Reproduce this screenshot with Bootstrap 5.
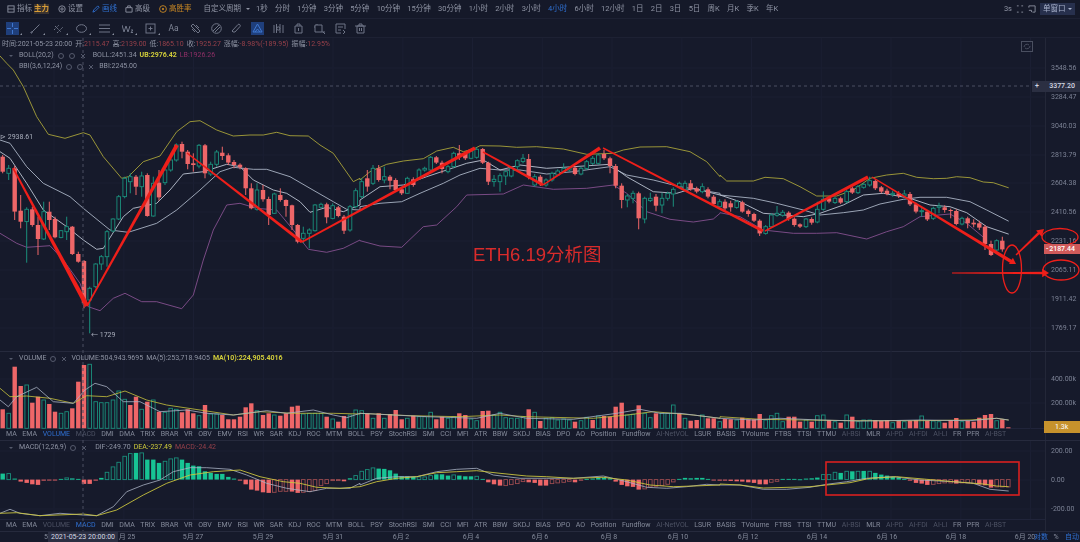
<!DOCTYPE html>
<html lang="zh">
<head>
<meta charset="utf-8">
<title>ETH 4小时 K线</title>
<link href="https://cdn.jsdelivr.net/npm/bootstrap@5.3.0/dist/css/bootstrap.min.css" rel="stylesheet">
<style>
html,body{background:#161a2b;height:542px;overflow:hidden}
body{font-family:Roboto,"Noto Sans CJK SC",sans-serif;font-size:7px;line-height:1;color:#8f94a4;position:relative;width:1080px}
svg{display:block}
.bar-top,.bar-draw,.stack{filter:blur(.35px)}
.ico{width:8px;height:8px;fill:none;stroke:currentColor;stroke-width:1;flex:none}
.bar-top{height:19px;padding-left:7px;font-size:7.5px;border-bottom:1px solid #1d2133;background:#151929}
.bar-top .tb-i{gap:2px}
.tb-badge{background:#3a3330;color:#d89c36;font-weight:700;padding:1.5px 0;width:15px;text-align:center}
.tb-blue{color:#2f6fd0}
.tb-gold{color:#c98824}
.tb-periods{gap:7.25px;margin-left:6px}
.tb-right{margin-left:auto;gap:4px;padding-right:5px}
.tb-btn{background:#27304d;color:#a9b2cc;padding:2px 3px;width:35px;height:12px;white-space:nowrap}
.caret-s{display:inline-block;border:2px solid transparent;border-top:2.5px solid currentColor;border-bottom:0;margin-left:2px;vertical-align:middle}
.bar-draw{height:19px;padding-left:1px;border-bottom:1px solid #1d2133;background:#151929;color:#6f7587}
.tool{width:23px;height:19px;position:relative}
.tool-n{width:20.7px}
.tool .ico{width:11px;height:11px}
.tool-on .ico{background:#1f3f7c;color:#3f78d0;outline:1px solid #1f3f7c}
.tool i{position:absolute;right:2px;bottom:3px;border-left:2px solid transparent;border-bottom:2px solid #8a90a0;width:0;height:0}
.stack{position:relative;height:504px}
.pane-main{height:314px;border-bottom:1px solid #262a3d}
.pane-vol{height:89px;border-bottom:1px solid #262a3d}
.pane-macd{height:90.5px;border-bottom:1px solid #262a3d}
.plot{position:relative;flex:1 1 auto;min-height:0}
.plot-svg{position:absolute;left:0;top:0}
.left-col{width:1045px}
.axis-col{width:35px;position:relative;border-left:1px solid #232738}
.axis-col span{position:absolute;left:5px;color:#7c8295;transform:translateY(-50%);white-space:nowrap}
.tab-row{height:12px;border-top:1px solid #20243a;padding-left:6px;gap:5.6px;white-space:nowrap;color:#848a9a;flex:none}
.tab-dim{color:#4d5264}
.tab-on{color:#2f6fd0}
.legend{position:absolute;left:2px;top:1px;z-index:2;white-space:nowrap}
.legend-row{display:flex;align-items:center;gap:3px;height:11px}
.legend-in{padding-left:5px}
.legend .ico{width:6px;height:6px;color:#555a6c;margin:0 1px}
.v-red{color:#96404a}
.v-yel{color:#cfcb3a;font-weight:700}
.v-pur{color:#8e2f66}
.date-row{height:10.5px;position:relative}
.date-row span{position:absolute;top:2px;transform:translateX(-50%);color:#848a9a;white-space:nowrap}
.date-row .dt-tip{background:#2b2f42;color:#d5d8e2;top:0;height:10.5px;padding:2px 3px;z-index:2}
.date-row .dt-blue{color:#2f6fd0;transform:none}
.mark-layer{position:absolute;left:0;top:0;z-index:3;pointer-events:none}
.ana-text{position:absolute;left:473px;top:205px;font-size:18.5px;line-height:24px;color:#d92b2b;z-index:3;white-space:nowrap;font-family:"Liberation Sans","Noto Sans CJK SC",sans-serif}
.px-tag{position:absolute;z-index:4;left:1044px;width:36px;height:10px;line-height:10px;padding-left:2px;padding-right:5px;color:#fff;font-weight:500;white-space:nowrap}
.tag-cross{left:1032px;width:48px;background:#2b2f42;color:#d5d8e2;padding-left:3px;height:11px;line-height:11px;top:43px}
.tag-now{background:#cf5a5a;top:206px}
.tag-vol{background:#c6922c;top:383px;height:12px;line-height:12px;font-weight:400;padding-left:11px}
.price-note{position:absolute;color:#a9aebc;z-index:2;white-space:nowrap}
.fs-ico{position:absolute;left:1021px;top:3px;color:#4a4f60;width:12px;height:11px;z-index:2}
.gap-l1{margin-left:1px}
.gap-l4{margin-left:4px}
</style>
</head>
<body>
<div class="bar-top d-flex align-items-center">
  <div class="tb-i d-flex align-items-center"><svg class="ico" viewBox="0 0 9 9"><rect x="1" y="1" width="7" height="7"/><path d="M1 4.5h7"/></svg><span>指标</span><span class="tb-badge">主力</span></div>
  <div class="tb-i d-flex align-items-center" style="margin-left:9px"><svg class="ico" viewBox="0 0 9 9"><circle cx="4.5" cy="4.5" r="3.6"/><circle cx="4.5" cy="4.5" r="1.3"/></svg><span>设置</span></div>
  <div class="tb-i d-flex align-items-center tb-blue" style="margin-left:9px"><svg class="ico" viewBox="0 0 9 9"><path d="M1 8l1-2.5L6.5 1 8 2.5 3.5 7z"/></svg><span>画线</span></div>
  <div class="tb-i d-flex align-items-center" style="margin-left:8px"><svg class="ico" viewBox="0 0 9 9"><path d="M1 3h7v5H1zM3 3V1h3v2"/></svg><span>高级</span></div>
  <div class="tb-i d-flex align-items-center tb-gold" style="margin-left:9px"><svg class="ico" viewBox="0 0 9 9"><circle cx="4.5" cy="4.5" r="3.8"/><circle cx="4.5" cy="4.5" r=".8" fill="currentColor"/></svg><span>高胜率</span></div>
  <div style="margin-left:12px">自定义周期<span class="caret-s" style="margin-left:5px"></span></div>
  <div class="tb-periods d-flex align-items-center">
    <span>1秒</span><span>分时</span><span>1分钟</span><span>3分钟</span><span>5分钟</span><span>10分钟</span><span>15分钟</span><span>30分钟</span><span>1小时</span><span>2小时</span><span>3小时</span><span class="tb-blue">4小时</span><span>6小时</span><span>12小时</span><span>1日</span><span>2日</span><span>3日</span><span>5日</span><span>周K</span><span>月K</span><span>季K</span><span>年K</span>
  </div>
  <div class="tb-right d-flex align-items-center">
    <span>3s</span>
    <svg class="ico" viewBox="0 0 9 9"><path d="M1 1h2M6 1h2M1 8h2M6 8h2M1 3v0M8 3v0"/></svg>
    <svg class="ico" viewBox="0 0 9 9"><path d="M1 1h7v7H5M1 1v2"/><path d="M1 6h3v2"/></svg>
    <span class="tb-btn d-inline-flex align-items-center">单窗口<span class="caret-s"></span></span>
  </div>
</div>
<div class="bar-draw d-flex align-items-center">
  <div class="tool tool-on d-flex align-items-center justify-content-center"><svg class="ico" viewBox="0 0 11 11"><path d="M5.500 0v4M5.500 7v4M0 5.500h4M7 5.500h4"/></svg><i></i></div>
  <div class="tool d-flex align-items-center justify-content-center"><svg class="ico" viewBox="0 0 11 11"><path d="M1.500 9.500l8-8"/><circle cx="1.500" cy="9.500" r=".7"/></svg><i></i></div>
  <div class="tool d-flex align-items-center justify-content-center"><svg class="ico" viewBox="0 0 11 11"><path d="M1 7l5-5M4 10l6-6M2 3l6 6" stroke-dasharray="2 1"/></svg><i></i></div>
  <div class="tool d-flex align-items-center justify-content-center"><svg class="ico" viewBox="0 0 11 11"><ellipse cx="5.500" cy="5.500" rx="5" ry="3.800"/></svg><i></i></div>
  <div class="tool d-flex align-items-center justify-content-center"><svg class="ico" viewBox="0 0 11 11"><path d="M0 2h11M0 5.500h11M0 9h11"/></svg><i></i></div>
  <div class="tool d-flex align-items-center justify-content-center"><svg class="ico" viewBox="0 0 11 11"><path d="M0 2l2 7 2-6 2 6 2-6"/><path d="M9 7h2l-2 2.500h2"/></svg><i></i></div>
  <div class="tool d-flex align-items-center justify-content-center"><svg class="ico" viewBox="0 0 11 11"><rect x="1" y="1" width="9" height="9"/><path d="M3.500 5.500h4M5.500 3.500v4"/></svg><i></i></div>
  <div class="tool d-flex align-items-center justify-content-center"><span style="font-size:8.5px;color:#7f8595">Aa</span></div>
  <div class="tool tool-n d-flex align-items-center justify-content-center"><svg class="ico" viewBox="0 0 11 11"><path d="M3 1l7 7-2 2-7-7zM2 6l3 3M6 2l3 3"/></svg></div>
  <div class="tool tool-n d-flex align-items-center justify-content-center"><svg class="ico" viewBox="0 0 11 11"><circle cx="5.500" cy="5.500" r="4.800"/><path d="M2 8l6-6M4 9l5-5"/></svg></div>
  <div class="tool tool-n d-flex align-items-center justify-content-center"><svg class="ico" viewBox="0 0 11 11"><path d="M2 9l-1-1 6-6.500c1-1 3 .5 2 2L4 9z"/></svg></div>
  <div class="tool tool-n tool-on d-flex align-items-center justify-content-center"><svg class="ico" viewBox="0 0 11 11"><path d="M5.500 1L1 9h9zM3 9l2.500-3L8 9"/></svg></div>
  <div class="tool tool-n d-flex align-items-center justify-content-center"><svg class="ico" viewBox="0 0 11 11"><path d="M1 2v8M3.500 1v9M7 1v9M10 2v8"/><circle cx="5.300" cy="5.500" r="1.600"/></svg></div>
  <div class="tool tool-n d-flex align-items-center justify-content-center"><svg class="ico" viewBox="0 0 11 11"><path d="M2 3h7v7H2zM4 3V1h3v2M5.500 5v3"/></svg></div>
  <div class="tool tool-n d-flex align-items-center justify-content-center"><svg class="ico" viewBox="0 0 11 11"><path d="M1 2h7v7H1zM3 2v-1M1 4H0M9 9l2 2M8 9h3"/></svg></div>
  <div class="tool tool-n d-flex align-items-center justify-content-center"><svg class="ico" viewBox="0 0 11 11"><path d="M1 1h9v5M1 1v9h5M3 4h5M3 7l3 0M8 7l2 2-2 2"/></svg></div>
  <div class="tool tool-n d-flex align-items-center justify-content-center"><svg class="ico" viewBox="0 0 11 11"><path d="M2 3h7v7H2zM0 3h11M4 3V1h3v2M4.500 5v3M6.500 5v3"/></svg></div>
</div>

<div class="stack">
  <div class="pane-main d-flex">
    <div class="left-col plot" id="plotMain">
      <svg class="fs-ico" viewBox="0 0 12 11"><rect x=".5" y=".5" width="11" height="10" fill="none" stroke="currentColor"/><path d="M3 6a3 3 0 0 1 5-2M9 5a3 3 0 0 1-5 2" fill="none" stroke="currentColor"/></svg>
      <div class="legend">
        <div class="legend-row"><span>时间:2021-05-23 20:00</span><span>开:<b class="v-red fw-normal">2115.47</b></span><span>高:<b class="v-red fw-normal">2139.00</b></span><span>低:<b class="v-red fw-normal">1865.10</b></span><span>收:<b class="v-red fw-normal">1925.27</b></span><span>涨幅:<b class="v-red fw-normal">-8.98%(-189.95)</b></span><span>振幅:<b class="v-red fw-normal">12.95%</b></span></div>
        <div class="legend-row legend-in"><span class="caret-s" style="margin-right:3px;color:#555a6c"></span><span>BOLL(20,2)</span><svg class="ico" viewBox="0 0 6 6"><circle cx="3" cy="3" r="2.500"/></svg><svg class="ico" viewBox="0 0 6 6"><circle cx="3" cy="3" r="2.500"/></svg><svg class="ico" viewBox="0 0 6 6"><path d="M1 1l4 4M5 1L1 5"/></svg><span style="margin-left:3px">BOLL:2451.34</span><span class="v-yel">UB:2976.42</span><span class="v-pur">LB:1926.26</span></div>
        <div class="legend-row legend-in"><span style="width:9px"></span><span>BBI(3,6,12,24)</span><svg class="ico" viewBox="0 0 6 6"><circle cx="3" cy="3" r="2.500"/></svg><svg class="ico" viewBox="0 0 6 6"><circle cx="3" cy="3" r="2.500"/></svg><svg class="ico" viewBox="0 0 6 6"><path d="M1 1l4 4M5 1L1 5"/></svg><span class="gap-l1">BBI:2245.00</span></div>
      </div>
      <span class="price-note" style="left:0;top:96px">⊳ 2938.61</span>
      <span class="price-note" style="left:91px;top:294px">← 1729</span>
    </div>
    <div class="axis-col" id="axisMain"></div>
  </div>
  <div class="pane-vol d-flex">
    <div class="left-col d-flex flex-column">
      <div class="plot" id="plotVol">
        <div class="legend"><div class="legend-row legend-in"><span class="caret-s" style="margin-right:3px;color:#555a6c"></span><span>VOLUME</span><svg class="ico" viewBox="0 0 6 6"><circle cx="3" cy="3" r="2.500"/></svg><svg class="ico" viewBox="0 0 6 6"><path d="M1 1l4 4M5 1L1 5"/></svg><span>VOLUME:504,943.9695</span><span>MA(5):253,718.9405</span><span class="v-yel">MA(10):224,905.4016</span></div></div>
      </div>
      <div class="tab-row d-flex align-items-center" id="tabs1"></div>
    </div>
    <div class="axis-col" id="axisVol"></div>
  </div>
  <div class="pane-macd d-flex">
    <div class="left-col d-flex flex-column">
      <div class="plot" id="plotMacd">
        <div class="legend"><div class="legend-row legend-in"><span class="caret-s" style="margin-right:3px;color:#555a6c"></span><span>MACD(12,26,9)</span><svg class="ico" viewBox="0 0 6 6"><circle cx="3" cy="3" r="2.500"/></svg><svg class="ico" viewBox="0 0 6 6"><path d="M1 1l4 4M5 1L1 5"/></svg><span class="gap-l4">DIF:-249.70</span><span class="v-yel fw-normal">DEA:-237.49</span><span class="v-red">MACD:-24.42</span></div></div>
      </div>
      <div class="tab-row d-flex align-items-center" id="tabs2"></div>
    </div>
    <div class="axis-col" id="axisMacd"></div>
  </div>
  <div class="date-row" id="dates"></div>
  <svg class="mark-layer" id="marks" width="1080" height="504" viewBox="0 38 1080 504"></svg>
  <div class="ana-text">ETH6.19分析图</div>
  <div class="px-tag tag-cross d-flex justify-content-between"><span>+</span><span>3377.20</span></div>
  <div class="px-tag tag-now d-flex justify-content-between"><span>-</span><span>2187.44</span></div>
  <div class="px-tag tag-vol">1.3k</div>
</div>

<script src="https://cdn.jsdelivr.net/npm/bootstrap@5.3.0/dist/js/bootstrap.bundle.min.js"></script>
<script>
// Candle data read off the chart: x, bodyTop, bodyBottom, colour, [wickTop, wickBottom]. Units are 1/3 px in three sections.
const seg=[
[0,"8,260,305,r,255,310;26,295,310,g,285,330;44,295,425,r,288,450;62,422,455,r,375,475;80,418,455,g,412,578;97,418,465,r,410,470;114,465,507,r,440,555;131,425,507,g,395,510;148,425,450,r,395,480;165,447,502,r,440,505;183,482,502,g,480,505;200,470,485,g,440,510;217,470,552,r,468,555;235,552,575,r,545,578;252,573,700,r,570,715;269,655,690,g,650,790;287,582,650,g,580,655;304,560,582,g,555,600;321,485,560,g,480,590;339,447,483,g,445,487;356,380,447,g,375,450;374,325,380,g,320,385;391,320,335,g,310,370;408,320,350,r,315,375;425,318,350,g,305,380;442,315,438,r,310,440;460,340,438,g,320,440;477,338,382,r,300,392;495,300,338,g,290,345;512,270,300,g,255,305;529,225,270,g,220,275;546,222,245,r,215,265;563,245,282,r,240,298;580,280,285,r,250,305;597,226,288,g,222,295;615,226,310,r,222,325;632,283,312,g,275,318;650,246,283,g,240,290;667,248,258,r,230,270;685,256,278,r,250,285;702,276,285,r,270,295;720,284,292,r,280,298;737,295,355,r,292,375;754,355,415,r,340,418;771,360,418,g,340,422;789,360,388,r,345,395;806,387,435,r,380,465;823,372,430,g,368,432;841,375,390,r,355,395;858,390,408,r,388,440;876,406,465,r,404,480;893,465,515,r,462,520;910,490,505,g,470,520;928,480,490,g,475,535;945,405,482,g,402,485;963,403,412,g,398,415;980,403,442,r,398,460;998,407,445,g,400,448;1015,412,438,r,408,442;1032,440,482,r,435,492;1050,410,480,g,405,485;1067,362,410,g,355,415"],
[360,"5,335,380,g,325,385;22,325,350,r,300,365;39,295,340,g,285,345;56,295,330,r,285,335;73,320,330,g,290,340;90,320,332,r,315,358;107,330,360,r,325,365;125,358,370,r,352,375;142,325,370,g,320,372;160,328,345,r,322,350;177,300,325,g,295,328;194,295,300,g,290,305;212,262,300,g,258,305;229,262,278,r,258,282;246,278,297,r,272,310;264,290,305,g,285,310;281,250,290,g,245,295;298,250,260,r,225,270;316,252,265,r,245,270;333,243,265,g,240,268;350,238,262,g,232,266;368,237,278,r,234,282;385,278,335,r,275,345;402,328,335,g,315,350;420,317,335,g,310,365;437,305,318,g,300,345;454,295,318,g,290,322;472,272,290,g,268,300;489,265,275,g,252,280;506,267,320,r,252,328;524,320,345,g,312,350;541,320,342,r,315,348;558,330,345,g,325,350;576,310,330,g,305,335;593,303,315,g,298,318;611,295,305,g,280,310;628,293,300,g,288,305;645,293,312,r,288,316;663,295,312,g,290,316;680,275,295,g,270,300;698,265,280,g,258,285;715,255,280,g,250,284;732,252,265,r,240,270;750,265,288,r,260,310;767,288,347,r,282,355;785,347,390,r,340,415;802,378,390,g,372,412;819,370,385,g,362,400;836,370,445,r,365,478;854,385,447,g,380,460;871,385,392,g,368,396;888,380,407,r,372,424;906,385,405,g,368,430;923,370,385,g,365,392;940,358,372,g,352,410;958,340,350,g,335,355;975,340,358,g,332,362;992,340,358,r,330,362;1010,355,365,r,350,370;1027,350,365,g,340,370;1044,358,380,r,352,385;1061,380,402,r,375,406;1079,395,410,g,388,415"],
[720,"15,395,415,r,388,420;32,400,412,r,392,425;50,395,412,g,390,416;67,397,425,r,392,428;85,422,432,r,418,440;102,432,452,r,428,456;119,452,490,r,448,498;137,470,490,g,465,494;154,435,470,g,430,474;171,430,436,g,408,440;188,427,436,g,420,440;206,428,447,r,424,452;223,446,465,r,442,470;240,463,470,r,460,474;258,447,470,g,444,474;275,447,458,r,442,464;292,418,456,g,395,460;310,388,418,g,364,422;327,385,395,r,380,400;345,385,398,g,380,402;362,385,398,r,380,402;380,365,395,g,360,400;397,355,368,r,350,372;414,350,368,g,345,372;431,343,352,g,338,356;449,332,345,g,320,350;466,333,355,r,328,360;484,352,365,r,348,370;501,362,372,r,356,376;518,370,374,g,362,380;536,370,378,r,364,384;553,372,378,g,360,384;570,372,403,r,366,408;588,403,425,r,398,430;605,422,424,g,412,440;622,425,448,r,420,453;640,415,445,g,410,450;657,408,412,g,398,430;674,412,420,r,406,428;692,420,423,r,416,445;709,423,462,r,418,466;726,445,462,g,440,466;743,445,460,r,440,475;761,458,463,r,448,472;778,460,473,r,452,480;795,470,522,r,465,540;813,522,555,r,512,558;830,512,540,g,508,545;847,512,538,r,500,545"]];
const BG='#161a2b',RED='#ee6668',TEAL='#1b8f7c',SOLID='#17c494';
const volSeg=[
[0,"8r178;26g190;44r50;62r108;80g105;97r158;114r140;131g150;148r162;165r185;183g190;200g185;217r175;235r95;252r45;269g43;287g155;304g158;321g158;339g150;356g123;374g148;391r165;408r140;425g178;442r155;460g150;477r185;495g187;512g175;529g178;546r187;563r178;580r190;597g197;615r165;632g192;650g192;667r195;685r208;702r208;720r200;737r172;754r160;771g182;789r195;806r190;823g195;841r197;858r190;876r170;893r167;910g192;928g190;945g190;963g190;980r200;998g207;1015r215;1032r198;1050g195;1067g180"],
[360,"5g182;22r190;39g205;56r190;73g205;90r192;107r180;125r208;142g205;160r197;177g200;194g200;212g187;229r208;246r200;264g205;281g200;298r190;316r195;333g207;350g212;368r183;385r182;402g195;420g187;437g203;454g205;472g205;489g200;506r178;524g187;541r213;558g205;576g203;593g210;611g207;628g210;645r215;663g212;680g202;698r210;715g198;732r198;750r200;767r170;785r158;802g195;819g193;836r166;854g190;871g203;888r190;906g190;923g190;940g165;958r190;975g205;992r212;1010r210;1027g195;1044r205;1061r205;1079g215"],
[720,"15r207;32r208;50g210;67r203;85r208;102r208;119r192;137g210;154g197;171g190;188g215;206r200;223r200;240r215;258g210;275r215;292g197;310g195;327r210;345g215;362r218;380g195;397r200;414g215;431g210;449g210;466r210;484r212;501r210;518g218;536r212;553g215;570r212;588r210;605g198;622r212;640g213;657g215;674r218;692r210;709r204;726g215;743r212;761r215;778r203;795r195;813r192;830g212;847r208;865r232"]];
// MACD bars: x, filled/hollow, height in 1/3 px
const macdSeg=[
[0,"8f18;26h18;44f3;62f-6;80f-10;97f-14;114f-16;131f-3;148f-2;165f-2;183f2;200h5;217h3;235f2;252f-13;269f-13;287f-3;304f5;321h22;339h38;356h52;374h70;391h78;408f80;425h80;442f60;460f60;477f50;495h55;512h62;529h65;546f60;563f50;580f42;597f40;615f25;632f20;650f17;667f17;685f8;702f3;720f-3;737f-14;754f-30;771f-33;789f-38;806f-40;823h-38;841h-35;858h-35;876f-36;893f-40;910h-38;928h-36;945h-32;963h-18;980h-12;998h-3;1015h-3;1032f-5;1050f4;1067h12"],
[360,"5h25;22h30;39h35;56f33;73f32;90f28;107f18;125f10;142f10;160f8;177h8;194h8;212h12;229f16;246f16;264f12;281h14;298f12;316f10;333f10;350h10;368f2;385f-8;402f-14;420f-18;437h-18;454h-15;472h-12;489h-6;506f-8;524f-10;541f-18;558f-18;576h-12;593h-10;611h-8;628h-5;645f-8;663f-2;680f2;698f3;715f5;732f6;750f4;767f-6;785f-16;802f-20;819f-22;836f-30;854h-28;871h-22;888h-20;906h-18;923h-14;940h-7;958f2;975f5;992f4;1010f5;1027f5;1044f2;1061f-2;1079f-3"],
[720,"15f-3;32f-4;50f-5;67f-6;85f-8;102f-10;119f-14;137f-14;154h-8;171h-5;188f2;206f2;223f2;240f1;258f3;275f4;292f6;310h15;327h15;345h22;362f20;380h25;397f25;414h25;431f26;449h25;466f20;484f15;501f12;518f8;536f6;553f2;570f-3;588f-10;605f-12;622f-16;640h-14;657h-12;674h-10;692h-10;709f-12;726h-10;743h-10;761h-12;778f-15;795f-17;813f-24;830h-22;847h-22;865h-22"]];
function pts(sections,base){ // "x,y x,y" in 1/3 px per section -> page px path
  let p=[];sections.forEach(([off,str])=>{str.trim().split(/\s+/).forEach(t=>{const [a,b]=t.split(',').map(Number);p.push([off+a/3,base+b/3])})});
  return p.map(q=>q[0].toFixed(1)+','+q[1].toFixed(1)).join(' ');
}
const line=(p,c,w=.9)=>`<polyline points="${p}" fill="none" stroke="${c}" stroke-width="${w}" stroke-linejoin="round" stroke-linecap="round"/>`;
const grid=(y0,y1,ys)=>{let s='';for(let x=54;x<1045;x+=69.75)s+=`<path d="M${x.toFixed(1)} ${y0}V${y1}" stroke="#1b1f33" stroke-width="1"/>`;ys.forEach(y=>s+=`<path d="M0 ${y}H1045" stroke="#1b1f33" stroke-width="1"/>`);return s};
// Main pane
let m=grid(38,352,[68,97,126,155,183,212,241,270,299,328]);
m+=line(pts([[0,"0,-42 20,-20 40,0 70,50 110,140 145,193 195,205 250,188 270,195 310,260 365,325 385,320 430,275 480,258 530,185 570,155 600,152 650,180 700,198 750,195 790,195 830,187 870,197 925,198 960,225 1000,250 1060,335 1080,325"],[360,"0,330 30,305 80,283 130,273 190,266 230,243 280,232 310,245 345,235 360,227 420,228 470,232 530,230 610,237 680,253 760,250 790,240 840,231 920,230 990,245 1040,275 1080,320"],[720,"0,315 20,333 100,333 135,322 190,326 240,350 290,378 350,378 400,360 450,325 500,315 550,310 590,322 640,326 680,325 710,320 750,323 790,336 820,338 865,353"]],70),'#a8a33a');
m+=line(pts([[0,"0,490 50,520 80,532 150,527 190,570 240,640 265,710 300,722 340,685 375,670 425,695 470,695 545,716 580,675 610,570 640,480 680,405 720,400 770,415 830,420 880,480 925,538 980,547 1030,535 1080,510"],[360,"0,512 60,528 125,532 190,470 230,465 290,410 320,375 430,372 490,345 580,358 680,355 760,345 800,370 860,425 930,448 1000,456 1060,447 1080,430"],[720,"0,428 60,440 130,480 220,490 290,490 350,488 440,507 500,485 550,470 600,440 690,432 740,460 800,510"]],70),'#85508f');
m+=line(pts([[0,"0,210 30,220 80,290 130,340 210,380 250,415 330,480 385,487 470,460 530,420 600,360 660,305 700,292 760,298 800,298 870,320 930,355 1000,395 1040,418 1080,420"],[360,"0,410 60,400 125,395 180,370 250,340 300,315 360,295 420,300 480,300 560,312 640,305 750,290 800,315 880,330 960,350 1080,370"],[720,"0,375 100,385 170,400 250,420 300,435 370,428 430,420 480,402 550,388 600,382 680,382 750,395 800,420 865,453"]],70),'#a9b3c4');
m+=line(pts([[0,"0,245 30,265 80,340 130,420 200,470 250,510 290,538 310,535 370,440 400,415 470,400 510,360 550,312 610,305 680,283 720,290 760,330 820,360 860,370 900,395 930,427 980,412 1030,425 1080,405"],[360,"0,390 60,350 130,345 200,320 260,300 320,280 370,270 420,300 480,285 560,295 640,290 750,283 800,320 880,365 950,370 1000,355 1080,375"],[720,"0,375 60,395 130,430 170,433 250,440 300,430 370,405 430,375 490,370 570,385 630,405 690,410 740,428 800,470 865,492"]],70),'#bcc4d2');
seg.forEach(([off,str])=>str.split(';').forEach(c=>{const [x,t,b,k,wt,wb]=c.split(',');const X=off+x/3,T=70+t/3,B=70+b/3,col=k==='r'?RED:TEAL;
  m+=`<path d="M${X.toFixed(1)} ${(70+wt/3).toFixed(1)}V${(70+wb/3).toFixed(1)}" stroke="${col}" stroke-width="1"/>`;
  m+=k==='r'?`<rect x="${(X-2.2).toFixed(1)}" y="${T.toFixed(1)}" width="4.4" height="${Math.max(1,B-T).toFixed(1)}" fill="${col}"/>`:`<rect x="${(X-1.8).toFixed(1)}" y="${T.toFixed(1)}" width="3.6" height="${Math.max(1,B-T).toFixed(1)}" fill="${BG}" stroke="${col}" stroke-width=".9"/>`;
}));
// Volume pane
let v=grid(352,429,[379,403]);
volSeg.forEach(([off,str])=>str.split(';').forEach(c=>{const k=c.match(/[rg]/)[0],[x,y]=c.split(k);const X=off+x/3,T=350+y/3,B=428.3;
  v+=k==='r'?`<rect x="${(X-2.2).toFixed(1)}" y="${T.toFixed(1)}" width="4.4" height="${(B-T).toFixed(1)}" fill="${RED}"/>`:`<rect x="${(X-1.8).toFixed(1)}" y="${T.toFixed(1)}" width="3.6" height="${(B-T).toFixed(1)}" fill="${BG}" stroke="${TEAL}" stroke-width=".9"/>`;
}));
v+=line(pts([[0,"0,115 30,140 80,138 150,145 220,160 260,137 320,140 375,123 440,150 500,165 600,180 700,195 780,185 880,190 1000,190 1080,192"],[360,"0,190 150,197 300,200 420,195 500,200 700,205 800,195 880,185 1000,195 1080,205"],[720,"0,200 120,208 250,210 400,212 600,212 750,210 830,205 865,210"]],350),'#c9c43e',.8);
v+=line(pts([[0,"0,150 25,170 50,140 110,112 160,155 220,160 255,120 285,100 320,110 370,155 420,155 480,185 560,180 620,190 700,195 800,182 860,190 940,180 1000,195 1040,203 1080,190"],[360,"0,190 100,195 200,200 350,205 420,190 500,205 640,208 770,190 840,178 900,190 960,190 1080,205"],[720,"0,205 100,210 180,205 300,210 420,213 500,212 600,210 750,212 830,205 865,210"]],350),'#a9b3c4',.8);
// MACD pane
let c2=grid(441,519,[451,480,509]);
const Z=479.6;
macdSeg.forEach(([off,str])=>str.split(';').forEach(c=>{const k=c.match(/[fh]/)[0],[x,h]=c.split(k);const X=off+x/3,H=h/3,T=H>0?Z-H:Z,col=H>0?(k==='f'?SOLID:TEAL):RED,ah=Math.max(.9,Math.abs(H));
  c2+=k==='f'?`<rect x="${(X-2.2).toFixed(1)}" y="${T.toFixed(1)}" width="4.4" height="${ah.toFixed(1)}" fill="${col}"/>`:`<rect x="${(X-1.8).toFixed(1)}" y="${T.toFixed(1)}" width="3.6" height="${ah.toFixed(1)}" fill="${BG}" stroke="${H>0?TEAL:'#9c4c50'}" stroke-width=".9"/>`;
}));
c2+=line(pts([[0,"0,490 30,478 60,490 120,497 180,490 250,495 290,497 340,470 380,425 430,405 480,390 520,365 570,353 620,353 690,358 740,375 800,400 860,415 930,425 980,415 1050,415 1080,400"],[360,"0,405 50,385 110,380 170,380 230,365 290,358 350,355 400,375 480,385 560,385 640,385 730,378 800,395 860,412 920,415 980,410 1040,403 1080,405"],[720,"0,405 60,405 130,418 200,418 270,412 320,403 380,395 440,385 520,380 600,390 700,395 760,400 810,418 865,423"]],350),'#a9b3c4',.8);
c2+=line(pts([[0,"0,490 50,488 120,497 250,492 290,497 350,480 430,435 500,400 570,375 640,365 720,360 780,380 850,395 900,400 950,412 1020,415 1080,410"],[360,"0,410 50,395 110,385 170,380 230,368 290,365 350,362 420,370 500,378 560,380 640,385 730,382 800,390 870,405 940,410 1000,408 1080,405"],[720,"0,402 60,405 130,414 270,410 320,405 390,398 450,385 530,380 620,388 700,395 790,402 830,408 865,410"]],350),'#c9c43e',.9);
function mount(id,y,h,html){const el=document.getElementById(id);const s=document.createElementNS('http://www.w3.org/2000/svg','svg');s.setAttribute('class','plot-svg');s.setAttribute('width',1045);s.setAttribute('height',h);s.setAttribute('viewBox',`0 ${y} 1045 ${h}`);s.innerHTML=html;el.prepend(s)}
mount('plotMain',38,314,m);mount('plotVol',352,77,v);mount('plotMacd',441,78,c2);
// Axis labels
function axis(id,y0,list){const el=document.getElementById(id);list.forEach(([y,t])=>{const s=document.createElement('span');s.textContent=t;s.style.top=(y-y0)+'px';el.append(s)})}
axis('axisMain',38,[[68,'3548.56'],[97,'3284.47'],[126,'3040.03'],[155,'2813.79'],[183,'2604.38'],[212,'2410.56'],[241,'2231.16'],[270,'2065.11'],[299,'1911.42'],[328,'1769.17']]);
axis('axisVol',352,[[379,'400.00k'],[403,'200.00k']]);
axis('axisMacd',441,[[451,'200.00'],[480,'0.00'],[509,'-200.00']]);
// Indicator tabs
const names='MA,EMA,VOLUME,MACD,DMI,DMA,TRIX,BRAR,VR,OBV,EMV,RSI,WR,SAR,KDJ,ROC,MTM,BOLL,PSY,StochRSI,SMI,CCI,MFI,ATR,BBW,SKDJ,BIAS,DPO,AO,Position,Fundflow,AI-NetVOL,LSUR,BASIS,TVolume,FTBS,TTSI,TTMU,AI-BSI,MLR,AI-PD,AI-FDI,AI-LI,FR,PFR,AI-BST'.split(',');
function tabs(id,on,off){const el=document.getElementById(id);names.forEach(n=>{const s=document.createElement('span');s.textContent=n;if(n===on)s.className='tab-on';else if(n===off||n.startsWith('AI-'))s.className='tab-dim';el.append(s)})}
tabs('tabs1','VOLUME','MACD');tabs('tabs2','MACD','VOLUME');
// Date axis
const d=document.getElementById('dates');
[[46,'5'],[127,'月 25'],[193,'5月 27'],[263,'5月 29'],[333,'5月 31'],[401,'6月 2'],[471,'6月 4'],[540,'6月 6'],[609,'6月 8'],[678,'6月 10'],[748,'6月 12'],[817,'6月 14'],[887,'6月 16'],[956,'6月 18'],[1025,'6月 20']].forEach(([x,t])=>{const s=document.createElement('span');s.textContent=t;s.style.left=x+'px';d.append(s)});
d.insertAdjacentHTML('beforeend','<span class="dt-tip" style="left:83px">2021-05-23 20:00:00</span><span class="dt-blue" style="left:1034px">对数</span><span style="left:1056px">%</span><span class="dt-blue" style="left:1065px">自动</span>');
// Hand-drawn annotations
function taper(x1,y1,x2,y2,w1,w2){const dx=x2-x1,dy=y2-y1,l=Math.hypot(dx,dy),nx=-dy/l/2,ny=dx/l/2;
  return `<polygon fill="#ef1f1a" points="${[[x1+nx*w1,y1+ny*w1],[x2+nx*w2,y2+ny*w2],[x2-nx*w2,y2-ny*w2],[x1-nx*w1,y1-ny*w1]].map(p=>p[0].toFixed(1)+','+p[1].toFixed(1)).join(' ')}"/>`}
function head(x,y,x0,y0,s){const a=Math.atan2(y-y0,x-x0),b=.55;const p=(t)=>[x-s*Math.cos(a+t),y-s*Math.sin(a+t)];return `<polygon fill="#ef1f1a" points="${x},${y} ${p(b).map(n=>n.toFixed(1))} ${p(-b).map(n=>n.toFixed(1))}"/>`}
const seq=`<path d="M83 38V531" stroke="#4a4f63" stroke-dasharray="3 3" fill="none"/><path d="M0 86H1032" stroke="#4a4f63" stroke-dasharray="3 3" fill="none"/>`
+taper(13,168,87,306,1.6,4.6)+taper(87,306,177,145,1.6,3.8)+taper(187,153,302,242,1.5,3)+taper(302,242,475,148,1.5,3.6)+taper(483,152,543,185,1.5,3)+taper(543,185,600,148,1.5,3.6)+taper(603,148,763,231,1.5,3)+taper(765,231,868,177,1.5,3.6)+taper(872,177,1012,262,1.5,3.4)
+head(1016,264,1000,254,7)+taper(1016,255,1041,231,1.5,2.5)+head(1044,229,1034,238,8)+taper(952,273,1045,273,1,2.4)+head(1049,273,1040,273,8)
+`<g fill="none" stroke="#ef1f1a" stroke-width="1.300"><ellipse cx="1012" cy="269" rx="9.500" ry="24"/><ellipse cx="1060" cy="237" rx="18" ry="8.500"/><ellipse cx="1061" cy="270" rx="18" ry="10"/></g><rect x="826" y="462" width="193" height="33" fill="none" stroke="#d92020" stroke-width="1.600"/>`;
document.getElementById('marks').innerHTML=seq;
</script>
</body>
</html>
